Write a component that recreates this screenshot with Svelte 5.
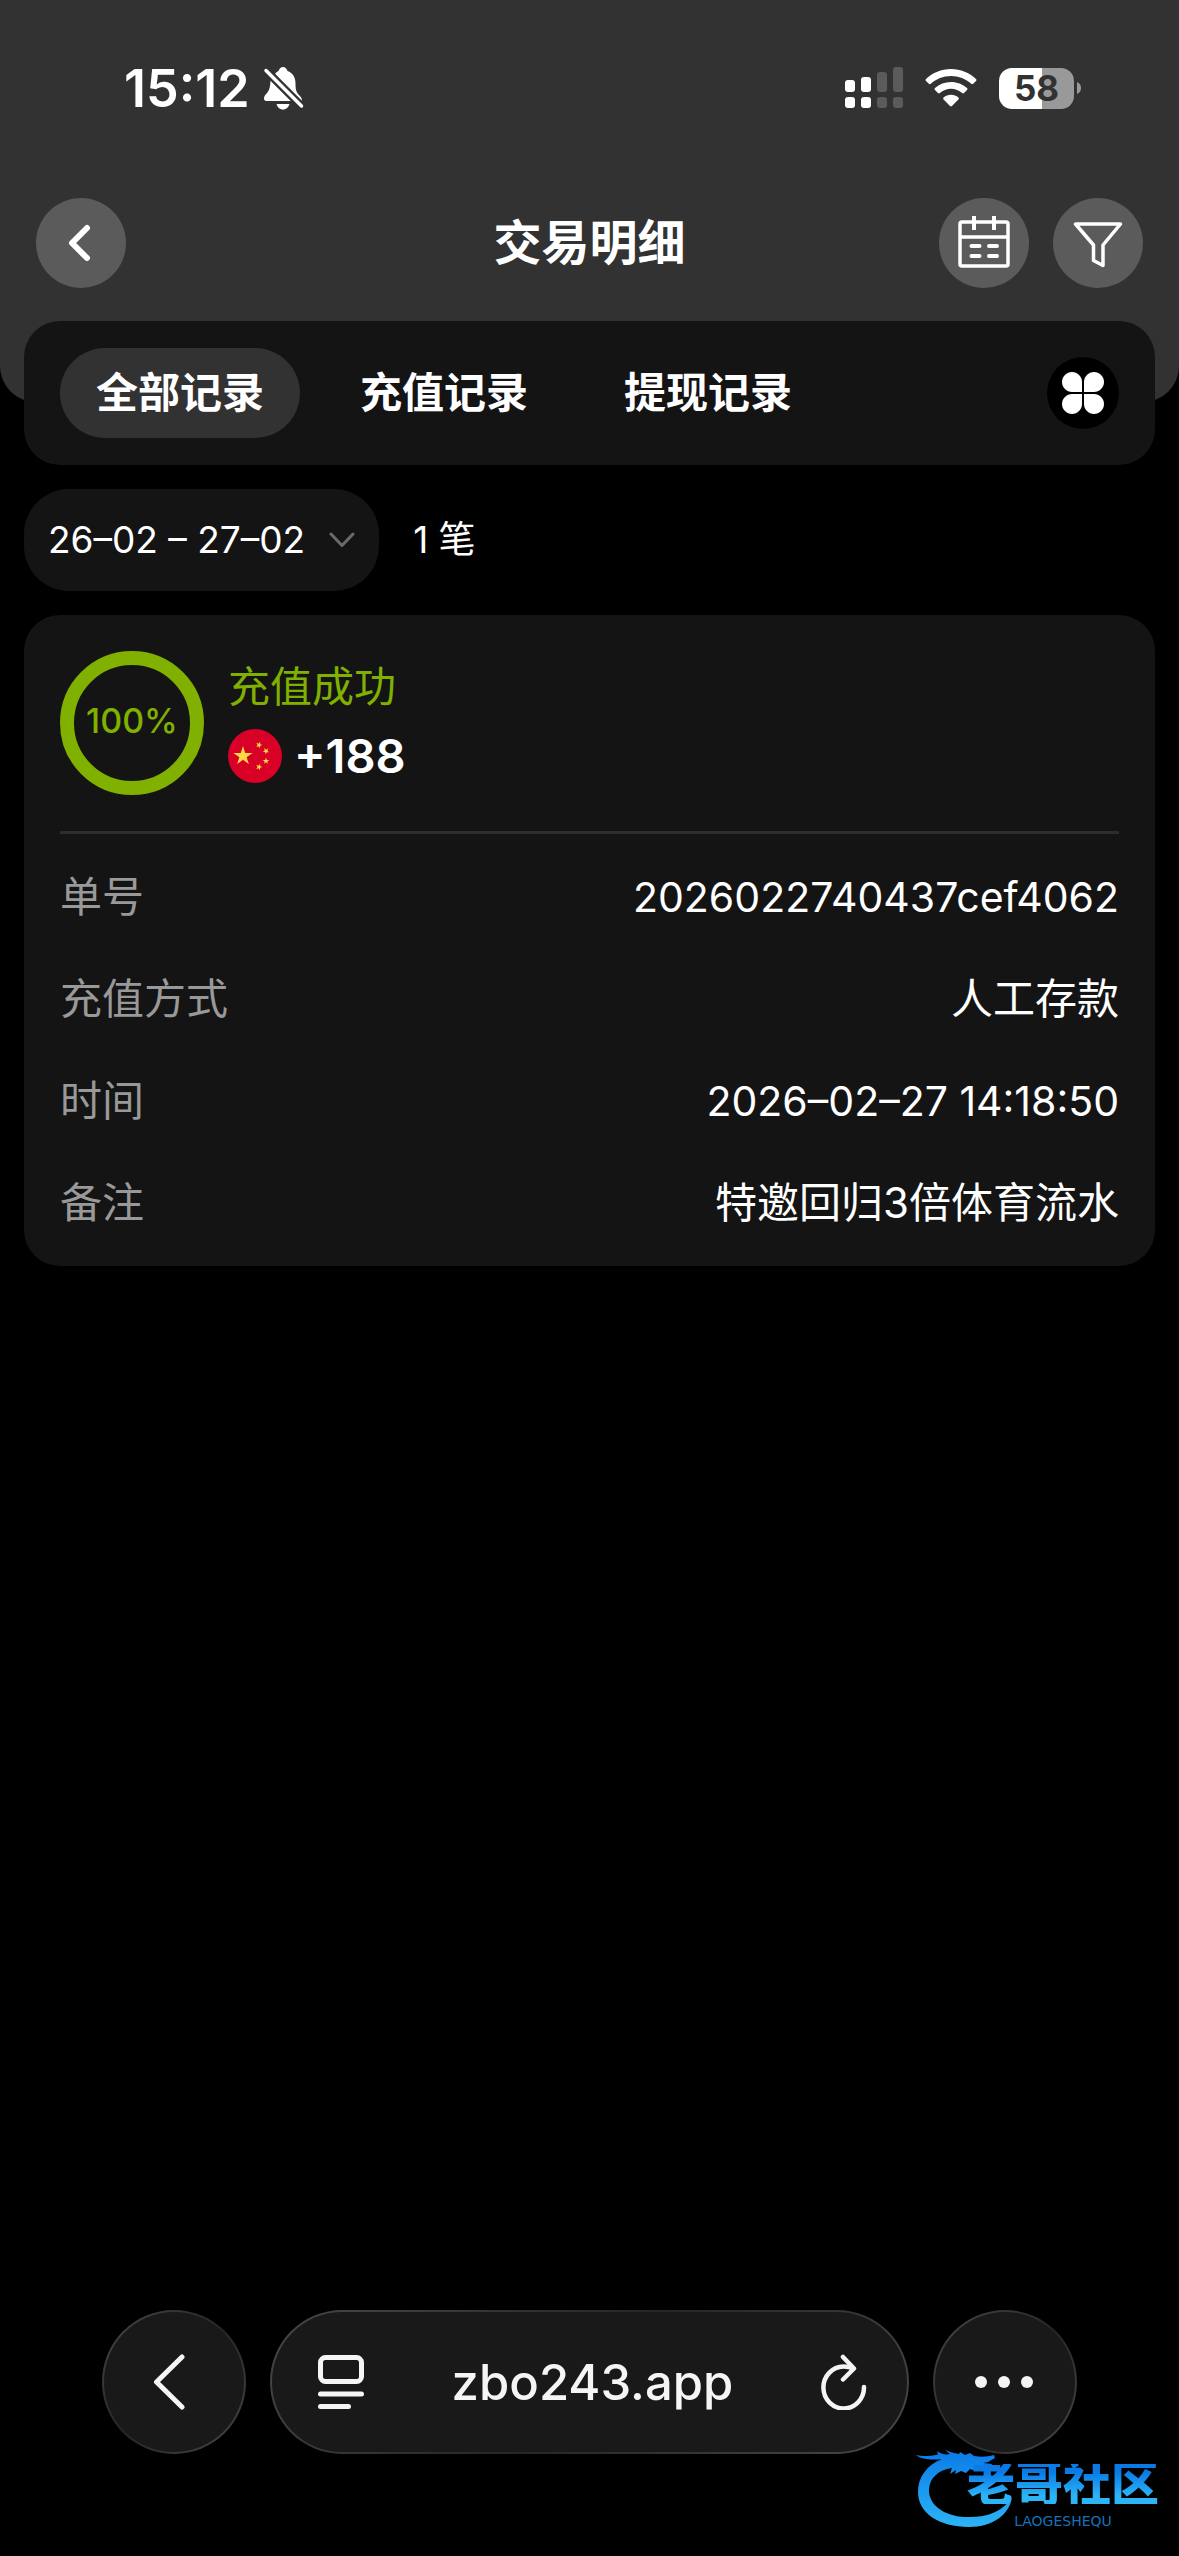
<script lang="ts">
  const tabs = ["全部记录", "充值记录", "提现记录"];
  let activeTab = $state("全部记录");

  const record = {
    percent: "100%",
    status: "充值成功",
    amount: "+188",
    rows: [
      { label: "单号", value: "2026022740437cef4062", numeric: true },
      { label: "充值方式", value: "人工存款" },
      { label: "时间", value: "2026–02–27 14:18:50", numeric: true },
      { label: "备注", value: "特邀回归3倍体育流水" },
    ],
  };

  // small stars of the flag: centre x, centre y, rotation
  const smallStars = [
    [31, 16, 20],
    [38, 22, 40],
    [38, 32, 0],
    [31, 38, 20],
  ];
</script>

<div class="page">
  <header class="top">
    <div class="status-bar">
      <div class="status-left">
        <span class="clock">15:12</span>
        <svg width="42" height="46" viewBox="0 0 42 46" aria-hidden="true">
          <path
            fill="#fff"
            d="M13 9c1-1.500 2-2.500 3.500-3C17.500 3.500 19 2 21 2s3.500 1.500 4.500 4c5.500 2 8 6.500 8 12.500 0 6 .8 8.500 3.500 11.500 2 2.200 3 3.600 3 5.500 0 .6-.2 1.200-.6 1.600z"
          />
          <path
            fill="#fff"
            d="M8.500 15.500L29 36H4.500C2.800 36 2 35 2 33.500c0-2 1-3.300 3-5.500 2.500-3 3.200-6 3.500-12.500zM14.500 39h13c-.8 3-3.200 5.500-6.500 5.500s-5.700-2.500-6.500-5.500z"
          />
          <path d="M4 5.500L39.500 41" stroke="#323232" stroke-width="8" />
          <path d="M4 5.500L39.500 41" stroke="#fff" stroke-width="3.500" stroke-linecap="round" />
        </svg>
      </div>
      <div class="status-right">
        <svg width="58" height="42" viewBox="0 0 58 42" aria-hidden="true">
          <g fill="#fff">
            <rect x="0" y="13" width="10" height="12" rx="3" />
            <rect x="16" y="10" width="10" height="15" rx="3" />
            <rect x="0" y="30" width="10" height="11" rx="3" />
            <rect x="16" y="30" width="10" height="11" rx="3" />
          </g>
          <g fill="#5b5b5b">
            <rect x="32" y="5" width="10" height="20" rx="3" />
            <rect x="48" y="0" width="10" height="25" rx="3" />
            <rect x="32" y="30" width="10" height="11" rx="3" />
            <rect x="48" y="30" width="10" height="11" rx="3" />
          </g>
        </svg>
        <svg width="52" height="38" viewBox="0 0 52 38" aria-hidden="true">
          <path
            fill="#fff"
            d="M26 0c9.600 0 18.400 3.700 25 10 .6.600.6 1.400 0 2l-2.800 2.800c-.6.600-1.400.6-2 0C40.800 9.800 33.800 7 26 7S11.200 9.800 5.800 14.800c-.6.600-1.400.6-2 0L1 12c-.6-.6-.6-1.400 0-2C7.600 3.700 16.400 0 26 0z"
          />
          <path
            fill="#fff"
            d="M26 13c6.100 0 11.700 2.300 16 6.100.6.600.6 1.400 0 2L39 24c-.5.500-1.300.5-1.900 0-3-2.600-6.900-4.200-11.100-4.200S17.900 21.400 14.900 24c-.6.500-1.400.5-1.900 0l-3-2.900c-.6-.6-.6-1.400 0-2C14.300 15.300 19.900 13 26 13z"
          />
          <path
            fill="#fff"
            d="M26 25.800c2.800 0 5.400 1 7.400 2.700.6.600.6 1.400 0 2L27 37c-.6.600-1.400.6-2 0l-6.400-6.500c-.6-.6-.6-1.400 0-2 2-1.700 4.600-2.700 7.400-2.700z"
          />
        </svg>
        <div class="battery">
          <span class="battery-body">58</span>
          <svg width="4" height="12" viewBox="0 0 4 12" aria-hidden="true">
            <path d="M0 0c2.500 1 4 3.300 4 6s-1.500 5-4 6z" fill="#999" />
          </svg>
        </div>
      </div>
    </div>

    <div class="nav-bar">
      <div class="nav-side">
        <button class="round-btn" aria-label="返回">
          <svg width="90" height="90" viewBox="0 0 90 90">
            <path
              d="M51 30L36 45l15 15"
              fill="none"
              stroke="#fff"
              stroke-width="6"
              stroke-linecap="round"
              stroke-linejoin="round"
            />
          </svg>
        </button>
      </div>
      <h1>交易明细</h1>
      <div class="nav-side end">
        <button class="round-btn" aria-label="日历">
          <svg width="90" height="90" viewBox="0 0 90 90" fill="none" stroke="#fff">
            <rect x="21" y="24" width="48" height="44" rx="2" stroke-width="3.500" />
            <path d="M20 39h50" stroke-width="3.500" />
            <path d="M35 18v14M55 18v14" stroke-width="4" />
            <path
              d="M32.500 48h8M50 48h8M32.500 58h8M50 58h8"
              stroke-width="4"
              stroke-linecap="round"
            />
          </svg>
        </button>
        <button class="round-btn" aria-label="筛选">
          <svg width="90" height="90" viewBox="0 0 90 90">
            <path
              d="M22.500 26h45L50 47v20.500l-9.500-5V47z"
              fill="none"
              stroke="#fff"
              stroke-width="3.500"
              stroke-linejoin="round"
            />
          </svg>
        </button>
      </div>
    </div>
  </header>

  <main>
    <nav class="tabs">
      {#each tabs as tab}
        <button
          class="tab-btn {activeTab === tab ? 'active' : ''}"
          onclick={() => (activeTab = tab)}
        >
          {tab}
        </button>
      {/each}
      <button class="grid-btn" aria-label="全部类型">
        <svg width="42" height="42" viewBox="0 0 42 42" fill="#fff">
          <path d="M10 0C15.500 0 20 4.500 20 10v10H10C4.500 20 0 15.500 0 10S4.500 0 10 0z" />
          <path d="M32 0c5.500 0 10 4.500 10 10s-4.500 10-10 10H22V10C22 4.500 26.500 0 32 0z" />
          <path d="M10 42C4.500 42 0 37.500 0 32s4.500-10 10-10h10v10c0 5.500-4.500 10-10 10z" />
          <path d="M32 42c-5.500 0-10-4.500-10-10V22h10c5.500 0 10 4.500 10 10s-4.500 10-10 10z" />
        </svg>
      </button>
    </nav>

    <div class="filter-row">
      <button class="date-btn">
        26–02 – 27–02
        <svg width="26" height="16" viewBox="0 0 26 16" aria-hidden="true">
          <path
            d="M2 2l11 11.500L24 2"
            fill="none"
            stroke="#6b6b6b"
            stroke-width="3"
            stroke-linecap="round"
            stroke-linejoin="round"
          />
        </svg>
      </button>
      <span>1 笔</span>
    </div>

    <article class="card">
      <div class="summary">
        <div class="ring">{record.percent}</div>
        <div class="summary-text">
          <div class="status">{record.status}</div>
          <div class="amount">
            <svg width="54" height="54" viewBox="0 0 54 54" aria-hidden="true">
              <defs>
                <path
                  id="star"
                  d="M0-10l2.245 6.910h7.265l-5.878 4.270 2.245 6.910L0 3.820-5.878 8.090l2.245-6.910L-9.511-3.090h7.265z"
                />
              </defs>
              <circle cx="27" cy="27" r="27" fill="#d80027" />
              <g fill="#ffda44">
                <use href="#star" transform="translate(15 27)" />
                {#each smallStars as [x, y, angle]}
                  <use href="#star" transform="translate({x} {y}) rotate({angle}) scale(0.35)" />
                {/each}
              </g>
            </svg>
            <span>{record.amount}</span>
          </div>
        </div>
      </div>
      <dl>
        {#each record.rows as row}
          <div class="row">
            <dt>{row.label}</dt>
            <dd class:numeric={row.numeric}>{row.value}</dd>
          </div>
        {/each}
      </dl>
    </article>
  </main>

  <footer class="browser-bar">
    <button class="glass circle" aria-label="后退">
      <svg width="44" height="56" viewBox="0 0 44 56">
        <path
          d="M30 3L4.500 28 30 53"
          fill="none"
          stroke="#f5f5f5"
          stroke-width="5"
          stroke-linecap="round"
          stroke-linejoin="round"
        />
      </svg>
    </button>
    <div class="glass address">
      <button class="plain" aria-label="页面菜单">
        <svg width="46" height="54" viewBox="0 0 46 54" fill="none" stroke="#f5f5f5">
          <rect x="2.500" y="2.500" width="41" height="24" rx="5" stroke-width="5" />
          <path d="M2.500 39h41M2.500 51.500h28" stroke-width="5" stroke-linecap="round" />
        </svg>
      </button>
      <button class="plain url">zbo243.app</button>
      <button class="plain" aria-label="刷新">
        <svg width="46" height="56" viewBox="0 0 46 56" fill="none" stroke="#f5f5f5">
          <path
            d="M43 33A20.300 21 0 1 1 22.500 12.500Q28 12.500 32 14.500"
            stroke-width="4.500"
            stroke-linecap="round"
          />
          <path
            d="M22 3l11 11.500L22 25.500"
            stroke-width="4.500"
            stroke-linecap="round"
            stroke-linejoin="round"
          />
        </svg>
      </button>
    </div>
    <button class="glass circle" aria-label="更多">
      <svg width="60" height="12" viewBox="0 0 60 12" fill="#f5f5f5">
        <circle cx="6" cy="6" r="6" />
        <circle cx="29" cy="6" r="6" />
        <circle cx="52" cy="6" r="6" />
      </svg>
    </button>
  </footer>

  <div class="watermark">
    <svg width="100" height="84" viewBox="16 16 100 84" aria-hidden="true">
      <defs>
        <linearGradient id="dragon" x1="0" y1="0" x2="0" y2="1">
          <stop offset="0" stop-color="#0a7be6" />
          <stop offset="1" stop-color="#2cb4f7" />
        </linearGradient>
      </defs>
      <path
        fill="url(#dragon)"
        d="M17 25c7 2 14 1 22-.5l-1-3.500c4 3 8 4 13 3l-5-4c5 2 9 3 14 4l1-2 5 3 5-2 4 3c7 1 13 1 20-1l1 3-7 4-5 1 9 1-3 6-8-2-5 3-6-2-4 4-5-2-6 3 1-4-6 4 2-6C39 40 31 48 30 59c-1 15 14 27 36 28 21 1 38-5 47-20-2 17-19 30-43 30C40 97 19 83 19 62c0-15 9-27 24-33-9 1-20 1-26-4z"
      />
    </svg>
    <div class="watermark-text">
      <span class="brand">老哥社区</span>
      <span class="brand-en">LAOGESHEQU</span>
    </div>
  </div>
</div>

<style>
  :global(body) {
    background: #000;
  }

  .page {
    position: relative;
    display: flex;
    flex-direction: column;
    min-height: 100vh;
    background: #000;
    color: #fff;
    font-family: Inter, "Noto Sans CJK SC", sans-serif;
    font-size: 42px;
  }

  button {
    padding: 0;
    border: none;
    background: none;
    color: inherit;
    font: inherit;
    cursor: pointer;
  }

  svg {
    display: block;
    flex-shrink: 0;
  }

  .top {
    padding-bottom: 114px;
    border-radius: 0 0 36px 36px;
    background: #323232;
  }

  .status-bar {
    display: flex;
    justify-content: space-between;
    align-items: center;
    height: 176px;
    padding: 0 98px 0 124px;
  }

  .status-left {
    display: flex;
    align-items: center;
    gap: 12px;
  }

  .clock {
    font-size: 52px;
    font-weight: 600;
  }

  .status-right {
    display: flex;
    align-items: center;
    gap: 22px;
  }

  .battery {
    display: flex;
    align-items: center;
    gap: 3px;
  }

  .battery-body {
    width: 75px;
    border-radius: 13px;
    background: linear-gradient(to right, #fff 57%, #999 57%);
    color: #323232;
    font-size: 35px;
    font-weight: 700;
    line-height: 41px;
    text-align: center;
  }

  .nav-bar {
    display: flex;
    align-items: center;
    padding: 22px 36px 0;
  }

  .nav-side {
    display: flex;
    flex: 1;
    gap: 24px;
  }

  .nav-side.end {
    justify-content: flex-end;
  }

  h1 {
    margin: 0;
    font-size: 48px;
    font-weight: 600;
    line-height: 72px;
  }

  .round-btn {
    width: 90px;
    height: 90px;
    border-radius: 50%;
    background: #5b5b5b;
  }

  main {
    display: flex;
    flex-direction: column;
    gap: 24px;
    margin-top: -81px;
    padding: 0 24px;
  }

  .tabs {
    display: flex;
    align-items: center;
    gap: 24px;
    padding: 27px 36px;
    border-radius: 36px;
    background: #141414;
  }

  .tab-btn {
    padding: 0 36px;
    border-radius: 45px;
    font-weight: 600;
    line-height: 90px;
    white-space: nowrap;
  }

  .tab-btn.active {
    background: #323232;
  }

  .grid-btn {
    display: grid;
    place-items: center;
    width: 72px;
    height: 72px;
    margin-left: auto;
    border-radius: 50%;
    background: #000;
  }

  .filter-row {
    display: flex;
    align-items: center;
    gap: 34px;
    font-size: 37px;
    line-height: 102px;
  }

  .date-btn {
    display: flex;
    align-items: center;
    gap: 24px;
    padding: 0 24px;
    border-radius: 45px;
    background: #141414;
  }

  .card {
    padding: 36px 36px 12px;
    border-radius: 36px;
    background: #141414;
  }

  .summary {
    display: flex;
    gap: 24px;
    padding-bottom: 36px;
    border-bottom: 3px solid #2d2d2d;
  }

  .ring {
    width: 116px;
    height: 116px;
    border: 14px solid #80b000;
    border-radius: 50%;
    color: #80b000;
    font-size: 34px;
    font-weight: 500;
    line-height: 112px;
    text-align: center;
  }

  .summary-text {
    display: flex;
    flex-direction: column;
    gap: 6px;
  }

  .status {
    color: #80b000;
    line-height: 72px;
  }

  .amount {
    display: flex;
    align-items: center;
    gap: 12px;
    font-size: 47px;
    font-weight: 600;
    line-height: 54px;
  }

  dl {
    margin: 12px 0 0;
  }

  .row {
    display: flex;
    justify-content: space-between;
    line-height: 102px;
  }

  dt {
    color: #999;
  }

  dd {
    margin: 0;
  }

  .numeric {
    font-size: 41px;
  }

  .browser-bar {
    display: flex;
    gap: 24px;
    margin-top: auto;
    padding: 0 102px 102px;
  }

  .glass {
    box-sizing: border-box;
    height: 144px;
    border: 2px solid transparent;
    border-radius: 72px;
    background:
      linear-gradient(#191919, #191919) padding-box,
      linear-gradient(135deg, #484848, #262626 50%, #484848) border-box;
  }

  .circle {
    display: grid;
    place-items: center;
    width: 144px;
    flex-shrink: 0;
  }

  .address {
    display: flex;
    flex: 1;
    align-items: center;
    justify-content: space-between;
    padding: 0 40px 0 46px;
  }

  .url {
    color: #f5f5f5;
    font-size: 49px;
    font-weight: 500;
  }

  .watermark {
    position: absolute;
    right: 20px;
    bottom: 26px;
    display: flex;
    pointer-events: none;
  }

  .watermark-text {
    display: flex;
    flex-direction: column;
    align-items: center;
    gap: 10px;
    margin: 18px 0 0 -48px;
  }

  .brand {
    background: linear-gradient(#0a7be6 20%, #2cb4f7 80%);
    background-clip: text;
    color: transparent;
    font-size: 48px;
    font-weight: 900;
    line-height: 40px;
  }

  .brand-en {
    color: #1672b8;
    font-family: "DejaVu Sans", sans-serif;
    font-size: 14px;
    line-height: 14px;
  }
</style>
